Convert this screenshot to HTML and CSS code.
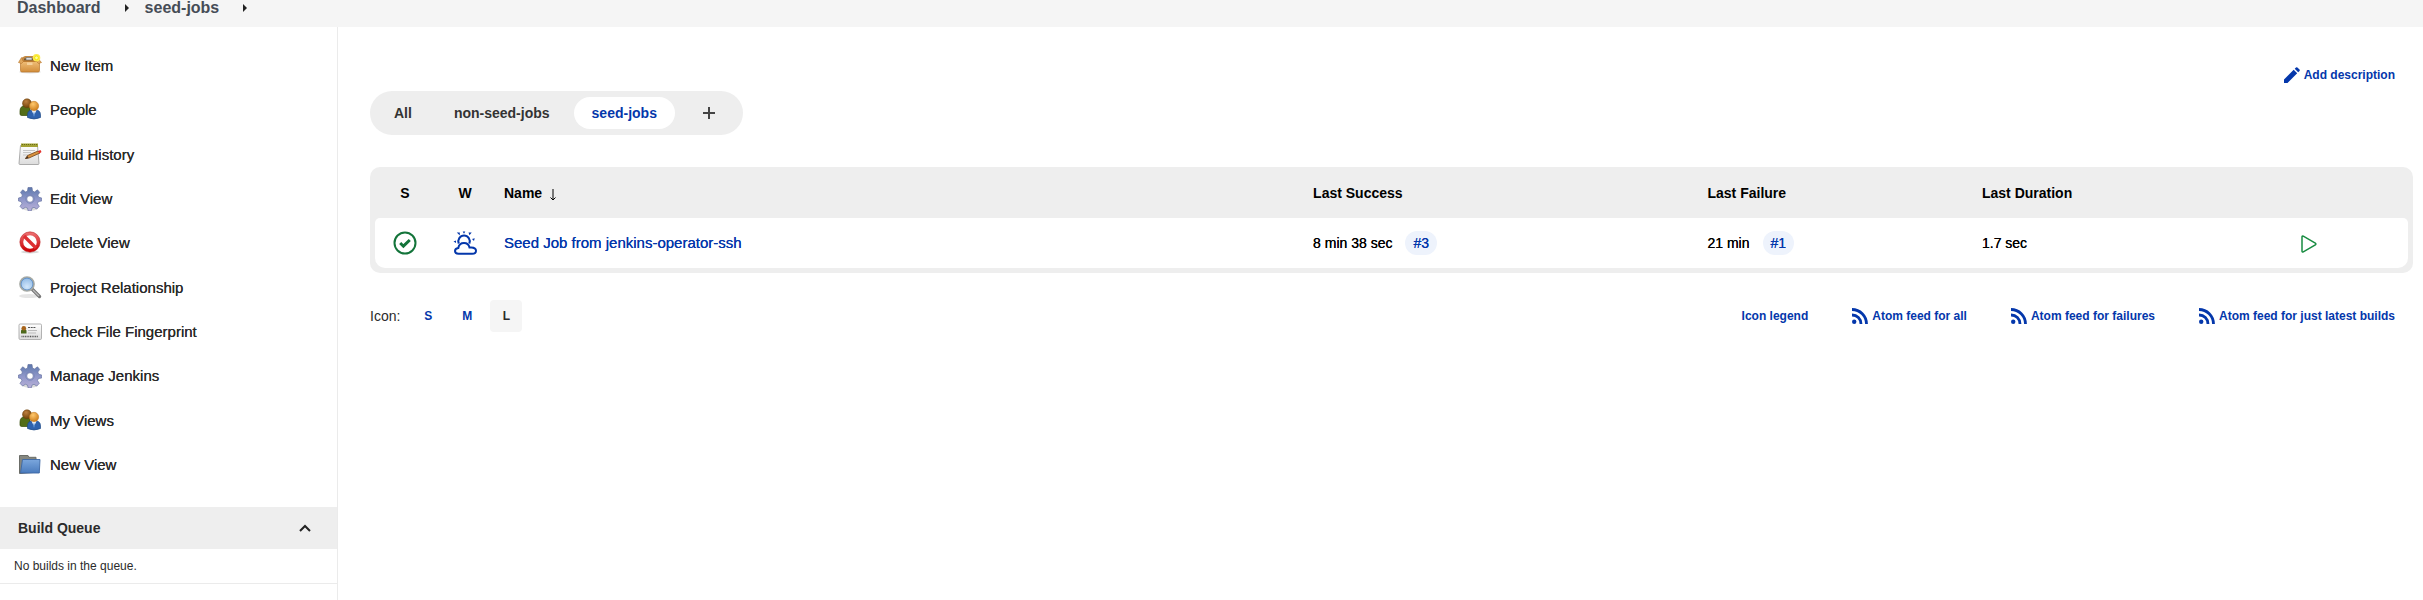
FILE: index.html
```html
<!DOCTYPE html>
<html lang="en">
<head>
<meta charset="utf-8">
<title>seed-jobs [Jenkins]</title>
<link rel="stylesheet" href="styles.css">
</head>
<body>
<svg class="defs" aria-hidden="true">
  <defs>
    <linearGradient id="g-box" x1="0" y1="0" x2="0" y2="1"><stop offset="0" stop-color="#efbd78"/><stop offset="1" stop-color="#d28d3a"/></linearGradient>
    <linearGradient id="g-gear" x1="0" y1="0" x2="0" y2="1"><stop offset="0" stop-color="#5b77ab"/><stop offset="0.5" stop-color="#8f97c9"/><stop offset="1" stop-color="#b9b0d8"/></linearGradient>
    <linearGradient id="g-red" x1="0" y1="0" x2="0" y2="1"><stop offset="0" stop-color="#ea6a6c"/><stop offset="1" stop-color="#cc0408"/></linearGradient>
    <linearGradient id="g-folder" x1="0" y1="0" x2="0" y2="1"><stop offset="0" stop-color="#7ba7dd"/><stop offset="1" stop-color="#4a7bbd"/></linearGradient>
    <linearGradient id="g-paper" x1="0" y1="0" x2="0" y2="1"><stop offset="0" stop-color="#ffffff"/><stop offset="1" stop-color="#dcdcdc"/></linearGradient>
    <radialGradient id="g-brown" cx="0.4" cy="0.3" r="0.7"><stop offset="0" stop-color="#bd8040"/><stop offset="1" stop-color="#704208"/></radialGradient>
    <radialGradient id="g-orange" cx="0.4" cy="0.3" r="0.7"><stop offset="0" stop-color="#ffc86e"/><stop offset="1" stop-color="#ce7e1c"/></radialGradient>
    <radialGradient id="g-lens" cx="0.5" cy="0.7" r="0.8"><stop offset="0" stop-color="#d3e7fb"/><stop offset="1" stop-color="#7eaee0"/></radialGradient>
    <symbol id="i-box" viewBox="0 0 24 24">
      <ellipse cx="12" cy="18" rx="11" ry="1.5" fill="#000" opacity="0.12"/>
      <path d="M4 3.500 7 2h11l2.500 3v4H3.500z" fill="#c58a43"/>
      <path d="M6 4.500h12v2H6z" fill="#6f5838"/>
      <path d="M8 3.500h6v2.500H8z" fill="#ddd" stroke="#666" stroke-width="0.6"/>
      <path d="M2.500 7.500h19v9q0 1.500-1.500 1.500H4q-1.500 0-1.500-1.500z" fill="url(#g-box)" stroke="#b9772c" stroke-width="0.7"/>
      <path d="M3.500 3.500 0.500 8.500l3 1L6 7h12l2.500 2.500 3-1-3-3.500-1.500 2H5z" fill="#dfa65c" stroke="#b9772c" stroke-width="0.6"/>
      <path d="M9 8.500h5.500v2.500H9z" fill="#f5d09b"/>
      <circle cx="18.500" cy="3.800" r="3.800" fill="#fce94f"/><circle cx="18.500" cy="3.800" r="1.900" fill="#fffba0" stroke="#f2ea00"/>
    </symbol>
    <symbol id="i-people" viewBox="0 0 24 24">
      <path d="M2 16V13q0-5 5-5.500l5 1v9H4q-2 0-2-1.500z" fill="#536d18" stroke="#354b06" stroke-width="0.7"/>
      <circle cx="9" cy="5.300" r="4.500" fill="url(#g-brown)" stroke="#6c4110" stroke-width="0.5"/>
      <path d="M9.500 19.500V17q0-5.500 6.500-5.500T22.500 17v2.500q-6.500 3-13 0z" fill="#2f62ae" stroke="#204a87" stroke-width="0.7"/>
      <path d="m13.500 12 2.500 5.500 2.500-5.500z" fill="#fff"/><path d="m16 13-1 4 1 2 1-2z" fill="#4f85ca"/>
      <circle cx="16" cy="8" r="4.700" fill="url(#g-orange)" stroke="#bf741d" stroke-width="0.5"/>
    </symbol>
    <symbol id="i-history" viewBox="0 0 24 24">
      <path d="M2.500 2.500h17l1.500 18q0 1-1 1H2q-1 0-1-1z" fill="url(#g-paper)" stroke="#999" stroke-width="0.8"/>
      <path d="M3 0.500h17v3.500H3z" fill="#a3a235"/><path d="M4 1.500h15" stroke="#696e16" stroke-dasharray="1 1"/>
      <path d="M5 7.500h12M5 9.500h8M5 12h5" stroke="#c6c6c6"/>
      <path d="m7.500 15.500 2-3L20 8l2 2-11 5z" fill="#d9913d" stroke="#70431a" stroke-width="0.8"/>
      <path d="m20 8 2.500-1 1 2-2 1.500z" fill="#e3322d"/><path d="m7 16 2.500-3 1 2z" fill="#403024"/>
    </symbol>
    <symbol id="i-gear" viewBox="0 0 24 24">
      <ellipse cx="12" cy="21.500" rx="8" ry="2" fill="#000" opacity="0.14"/>
      <path fill-rule="evenodd" d="M10 0.500h4l0.500 3.500 2 1 3-2.200 2.200 2.600-1.900 2.600 0.800 2.200 3.100 0.800v3l-3.300 0.500-0.900 2.100 1.800 2.800-2.600 2.600-2.700-1.700-2 0.800-0.800 2.900h-3l-0.700-2.900-2.100-0.800-2.800 1.700-2.600-2.600 1.900-2.800-0.900-2.100L0.500 14v-3l3.100-0.800 0.800-2.200-1.900-2.600 2.200-2.600 3 2.200 1.800-1zM12 8.700a3.300 3.300 0 1 0 0 6.600 3.300 3.300 0 0 0 0-6.600z" fill="url(#g-gear)" stroke="#6876a3" stroke-width="0.7"/>
      <circle cx="12" cy="12" r="4.300" fill="none" stroke="#7885b7" stroke-width="0.8"/>
    </symbol>
    <symbol id="i-delete" viewBox="0 0 24 24">
      <ellipse cx="12" cy="21" rx="9" ry="1.500" fill="#000" opacity="0.15"/>
      <circle cx="12" cy="11" r="8.500" fill="#fff" stroke="url(#g-red)" stroke-width="3.400"/>
      <path d="m6 5 12 12" stroke="#dd3033" stroke-width="3.400"/>
      <circle cx="12" cy="11" r="10.200" fill="none" stroke="#b9191b" stroke-width="0.500"/>
    </symbol>
    <symbol id="i-search" viewBox="0 0 24 24">
      <ellipse cx="11" cy="20" rx="10" ry="2" fill="#000" opacity="0.1"/>
      <path d="m14 13 7.500 7.500" stroke="#777" stroke-width="3.400" stroke-linecap="round"/><path d="m15 14 6 6" stroke="#bbb" stroke-width="1.200"/>
      <circle cx="9" cy="8" r="7" fill="url(#g-lens)" stroke="#a7aaa4" stroke-width="1.700"/>
      <circle cx="9" cy="8" r="5.900" fill="none" stroke="#4e80bd" stroke-width="0.700"/>
    </symbol>
    <symbol id="i-card" viewBox="0 0 24 24">
      <rect x="1" y="4" width="22.500" height="15.500" rx="1.200" fill="url(#g-paper)" stroke="#aaa" stroke-width="0.900"/>
      <path d="M3 13.500V11q0-2 2.800-2T8.500 11v2.500z" fill="#4c691b"/><circle cx="5.800" cy="8.300" r="2.300" fill="#a7641c"/>
      <path d="M10 7.500h8" stroke="#555" stroke-width="1.200" stroke-dasharray="2 0.700"/><path d="M10 10.500h9M10 13h8" stroke="#bbb"/>
      <path d="M3.500 16.500h17" stroke="#555" stroke-width="1.500" stroke-dasharray="1 0.700"/>
    </symbol>
    <symbol id="i-folder" viewBox="0 0 24 24">
      <path d="M1.500 20.500V2.500h8.500l1 1.800h7v15z" fill="#858780" stroke="#6b6d68"/>
      <path d="M4.500 6.500h17.500l-0.700 13.500H2.500z" fill="url(#g-folder)" stroke="#3c68a5" stroke-width="0.900"/>
    </symbol>
    <symbol id="i-feed" viewBox="0 0 16 16">
      <circle cx="2.200" cy="13.700" r="2.200" fill="currentColor"/>
      <path d="M0 7a8.900 8.900 0 0 1 9 9M0 1.500a14.500 14.500 0 0 1 14.500 14.500" fill="none" stroke="currentColor" stroke-width="2.800"/>
    </symbol>
  </defs>
</svg>

<header class="breadcrumbs">
  <nav aria-label="Breadcrumb">
    <a href="#">Dashboard</a>
    <svg class="caret" viewBox="0 0 4 8" aria-hidden="true"><path d="M0 0l4 4-4 4z"/></svg>
    <a href="#">seed-jobs</a>
    <svg class="caret" viewBox="0 0 4 8" aria-hidden="true"><path d="M0 0l4 4-4 4z"/></svg>
  </nav>
</header>

<div class="page">
  <aside class="side">
    <nav class="tasks" aria-label="Tasks">
      <a href="#"><svg><use href="#i-box"/></svg>New Item</a>
      <a href="#"><svg><use href="#i-people"/></svg>People</a>
      <a href="#"><svg><use href="#i-history"/></svg>Build History</a>
      <a href="#"><svg><use href="#i-gear"/></svg>Edit View</a>
      <a href="#"><svg><use href="#i-delete"/></svg>Delete View</a>
      <a href="#"><svg><use href="#i-search"/></svg>Project Relationship</a>
      <a href="#"><svg><use href="#i-card"/></svg>Check File Fingerprint</a>
      <a href="#"><svg><use href="#i-gear"/></svg>Manage Jenkins</a>
      <a href="#"><svg><use href="#i-people"/></svg>My Views</a>
      <a href="#"><svg><use href="#i-folder"/></svg>New View</a>
    </nav>
    <section class="queue">
      <div class="queue-head">
        <h2>Build Queue</h2>
        <button type="button" aria-label="Collapse"><svg viewBox="0 0 12 8"><path d="M1 7l5-5 5 5"/></svg></button>
      </div>
      <p>No builds in the queue.</p>
    </section>
  </aside>

  <main class="main">
    <div class="describe">
      <a class="small-link" href="#">
        <svg viewBox="0 0 16 16" fill="currentColor"><path d="M0 16v-3.500L9.700 2.800l3.500 3.500L3.500 16zM10.700 1.800l1.300-1.300q0.700-0.700 1.400 0l2.100 2.100q0.700 0.700 0 1.400l-1.300 1.300z"/></svg>
        Add description</a>
    </div>

    <nav class="tabs" aria-label="Views">
      <a href="#">All</a>
      <a href="#">non-seed-jobs</a>
      <a class="active" href="#" aria-current="page">seed-jobs</a>
      <a class="add" href="#" aria-label="New View"><svg viewBox="0 0 12 12"><path d="M6 0v12M0 6h12"/></svg></a>
    </nav>

    <div class="table-frame">
      <table>
        <thead>
          <tr>
            <th class="icon-col">S</th>
            <th class="icon-col">W</th>
            <th>Name <svg class="sort" viewBox="0 0 6 12"><path d="M3 0v11M0.500 8.500L3 11l2.500-2.500"/></svg></th>
            <th class="success-col">Last Success</th>
            <th class="failure-col">Last Failure</th>
            <th class="duration-col">Last Duration</th>
            <th class="run-col"></th>
          </tr>
        </thead>
        <tbody>
          <tr>
            <td class="icon-col"><svg class="status" viewBox="0 0 24 24" role="img" aria-label="Success"><circle cx="12" cy="12" r="10.500"/><path class="tick" d="M7.200 12l3.200 3.200L16.800 9"/></svg></td>
            <td class="icon-col"><svg class="weather" viewBox="0 0 24 24" role="img" aria-label="Build stability">
              <path d="M5.500 22.700q-3.500 0-3.500-2.700 0-2.500 3.300-3 0.900-5 5.700-5 4.500 0 5.500 4.500h1.700q4.800 0.200 4.800 3.200 0 3-3.800 3z"/>
              <path d="M5.800 12.500A5.700 5.700 0 1 1 16.300 12.500"/>
              <path class="rays" d="M3.800 1.500h3v3zM9.700 0.500h2.600L11 2.800zM15.500 1.500h3.200l-2.200 2.800zM0.500 10.500l2.500-1v2.500zM19 8l2.700-0.700-0.700 2.700z"/></svg></td>
            <td><a class="job" href="#">Seed Job from jenkins-operator-ssh</a></td>
            <td>8 min 38 sec<a class="badge" href="#">#3</a></td>
            <td>21 min<a class="badge" href="#">#1</a></td>
            <td>1.7 sec</td>
            <td class="run-col"><button type="button" aria-label="Schedule a build"><svg viewBox="0 0 16 18"><path d="M1 2v14q0 1.500 1.300 0.800L14.300 10q1.200-1 0-1.800L2.300 1.200Q1 0.600 1 2z"/></svg></button></td>
          </tr>
        </tbody>
      </table>
    </div>

    <div class="footer">
      <div class="sizes">
        <span>Icon:</span>
        <a href="#">S</a>
        <a href="#">M</a>
        <span class="current">L</span>
      </div>
      <div class="feeds">
        <a class="small-link" href="#">Icon legend</a>
        <a class="small-link" href="#"><svg><use href="#i-feed"/></svg>Atom feed for all</a>
        <a class="small-link" href="#"><svg><use href="#i-feed"/></svg>Atom feed for failures</a>
        <a class="small-link" href="#"><svg><use href="#i-feed"/></svg>Atom feed for just latest builds</a>
      </div>
    </div>
  </main>
</div>
</body>
</html>
```

FILE: styles.css
```css
* { box-sizing: border-box; }

:root {
  --link: #0437ab;
  --panel: #eeeeee;
  --text: #2b2b2b;
}

body {
  margin: 0;
  min-height: 100vh;
  display: flex;
  flex-direction: column;
  background: #fff;
  color: var(--text);
  font: 14px/20px "Liberation Sans", Arial, sans-serif;
}

a { color: var(--link); text-decoration: none; }
a:hover { text-decoration: underline; }
button { border: 0; padding: 0; background: none; cursor: pointer; }
svg { display: block; flex: none; }
.defs { position: absolute; width: 0; height: 0; }

.breadcrumbs { background: #f5f5f5; padding: 0 17px 11px; }
.breadcrumbs nav { display: flex; align-items: center; font-size: 16px; line-height: 16px; font-weight: bold; }
.breadcrumbs a { color: #454c56; }
.caret { width: 4px; height: 8px; margin: 0 16px 0 24px; fill: #222; }

.page { flex: 1; display: flex; }

.side { width: 338px; flex: none; border-right: 1px solid #ebebeb; padding-top: 17px; }
.tasks { display: grid; grid-auto-rows: 1fr; min-height: 443px; margin-bottom: 20px; }
.tasks a {
  display: flex;
  align-items: center;
  gap: 8px;
  padding-left: 18px;
  color: var(--text);
  font-size: 15px;
  text-shadow: 0 0 currentColor;
}
.tasks svg { width: 24px; height: 24px; }

.queue-head { display: flex; align-items: center; justify-content: space-between; height: 42px; padding: 0 26px 0 18px; background: var(--panel); }
.queue-head h2 { margin: 0; font-size: 14px; line-height: 20px; }
.queue-head svg { width: 12px; height: 8px; fill: none; stroke: #222; stroke-width: 2; }
.queue p { margin: 0; padding: 7px 14px; font-size: 12px; border-bottom: 1px solid #ebebeb; }

.main { flex: 1; min-width: 0; padding: 40px 10px 20px 32px; }

.describe { display: flex; justify-content: flex-end; padding-right: 18px; margin-bottom: 8px; }
.small-link { display: flex; align-items: center; gap: 4px; font-size: 12px; line-height: 16px; font-weight: bold; }
.small-link svg { width: 16px; height: 16px; }

.tabs { display: flex; gap: 6px; width: fit-content; padding: 6px; margin-bottom: 32px; border-radius: 22px; background: var(--panel); font-weight: bold; }
.tabs a { display: flex; align-items: center; height: 32px; padding: 0 18px; border-radius: 16px; color: #333; }
.tabs .active { background: #fff; color: var(--link); }
.tabs .add { padding: 0 22px; }
.tabs svg { width: 12px; height: 12px; stroke: #444; stroke-width: 2; }

.table-frame { padding: 0 5px 5px; border-radius: 10px; background: var(--panel); margin-bottom: 27px; color: #000; }
table { width: 100%; table-layout: fixed; border-collapse: separate; border-spacing: 0; }
th { height: 51px; padding: 0 9px; text-align: left; }
td { height: 50px; padding: 0 9px; background: #fff; text-shadow: 0 0 currentColor; }
td:first-child { border-radius: 5px 0 0 10px; }
td:last-child { border-radius: 0 5px 10px 0; }
.icon-col { width: 60px; padding: 0; text-align: center; }
.icon-col svg { width: 24px; height: 24px; margin: 0 auto; fill: none; }
.success-col { width: 19.4%; }
.failure-col { width: 13.5%; }
.duration-col { width: 11.7%; }
.run-col { width: 9.7%; text-align: center; }
.sort { display: inline-block; width: 6px; height: 12px; margin-left: 4px; vertical-align: -3px; fill: none; stroke: #000; }
.status { stroke: #13743a; stroke-width: 2; }
.status .tick { stroke-width: 3; }
.weather { stroke: var(--link); stroke-width: 2; }
.weather .rays { fill: var(--link); stroke: none; }
.job { font-size: 15px; }
.badge { display: inline-block; margin-left: 13px; padding: 0 8px; border-radius: 12px; line-height: 24px; background: #eef3fc; }
.run-col button { display: inline-block; vertical-align: middle; }
.run-col svg { width: 16px; height: 18px; fill: none; stroke: #198c42; stroke-width: 1.5; }

.footer { display: flex; align-items: center; justify-content: space-between; padding-right: 18px; }
.sizes { display: flex; align-items: center; gap: 7px; }
.sizes span:first-child { margin-right: 5px; }
.sizes a, .current { width: 32px; line-height: 32px; text-align: center; font-size: 12px; font-weight: bold; }
.current { border-radius: 4px; background: #f5f5f5; }
.feeds { display: flex; gap: 44px; }
```
